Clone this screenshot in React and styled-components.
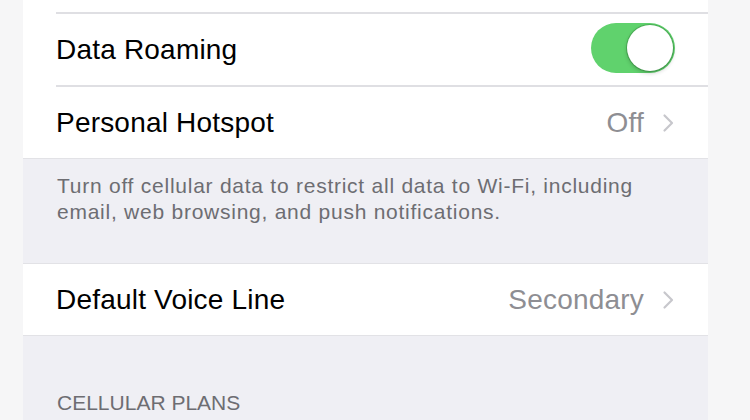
import React from 'react'
import styled, { createGlobalStyle } from 'styled-components'

const Global = createGlobalStyle`
  body {
    margin: 0;
    background: #f6f6f7;
    font-family: "Liberation Sans", Arial, sans-serif;
    -webkit-font-smoothing: antialiased;
  }
`

function App() {
  return (
    <Page>
      <Global />
      <Panel>
        <Group>
          <Stub />
          <Row>
            <Label>Data Roaming</Label>
            <Toggle on />
          </Row>
          <Row last>
            <Label>Personal Hotspot</Label>
            <Value>Off</Value>
            <Chevron />
          </Row>
        </Group>
        <Footer>
          Turn off cellular data to restrict all data to Wi-Fi, including
          email, web browsing, and push notifications.
        </Footer>
        <Group>
          <Row last>
            <Label>Default Voice Line</Label>
            <Value>Secondary</Value>
            <Chevron />
          </Row>
        </Group>
        <Header>Cellular Plans</Header>
      </Panel>
    </Page>
  )
}

export default App

function Toggle({ on }) {
  return (
    <Switch on={on ? 1 : 0}>
      <Knob />
    </Switch>
  )
}

function Chevron() {
  return (
    <ChevronIcon width="12" height="20" viewBox="0 0 12 20">
      <polyline points="2.5,2.5 10,10 2.5,17.5" fill="none" stroke="#c7c7cc" strokeWidth="2.2" strokeLinecap="round" strokeLinejoin="round" />
    </ChevronIcon>
  )
}

const Page = styled.div`
  display: flex;
  padding-left: 23px;
  width: 750px;
  height: 420px;
  overflow: hidden;
  box-sizing: border-box;
`
const Panel = styled.div`
  width: 685px;
  background: #efeff4;
  display: flex;
  flex-direction: column;
`
const Group = styled.div`
  background: #fff;
  box-shadow: 0 1px 0 #e2e2e6, 0 -1px 0 #e2e2e6;
`
const Stub = styled.div`
  height: 12px;
  margin-left: 33px;
  border-bottom: 2px solid #dfdfe3;
`
const Row = styled.div`
  height: 71px;
  display: flex;
  align-items: center;
  margin-left: 33px;
  padding-right: 33px;
  border-bottom: ${p => p.last ? 'none' : '2px solid #dfdfe3'};
`
const Label = styled.div`
  flex: 1;
  font-size: 28px;
  color: #000;
  letter-spacing: 0.2px;
`
const Value = styled.div`
  font-size: 28px;
  color: #8e8e93;
  margin-right: 18px;
  letter-spacing: 0.2px;
`
const ChevronIcon = styled.svg`
  display: block;
  margin-right: 1px;
`
const Switch = styled.div`
  width: 84px;
  height: 50px;
  margin-top: -3px;
  border-radius: 25px;
  background: ${p => p.on ? '#60d26d' : '#e5e5ea'};
  position: relative;
`
const Knob = styled.div`
  position: absolute;
  top: 2px;
  right: 2px;
  width: 46px;
  height: 46px;
  border-radius: 50%;
  background: #fff;
  box-shadow: 0 2px 4px rgba(0,0,0,0.22), 0 0 0 1px rgba(40,120,50,0.35);
`
const Footer = styled.div`
  padding: 15px 40px 39px 34px;
  font-size: 21px;
  line-height: 26px;
  letter-spacing: 0.75px;
  color: #6d6d72;
  height: 52px;
`
const Header = styled.div`
  margin-top: 56px;
  padding-left: 34px;
  font-size: 21px;
  color: #6d6d72;
  text-transform: uppercase;
`
